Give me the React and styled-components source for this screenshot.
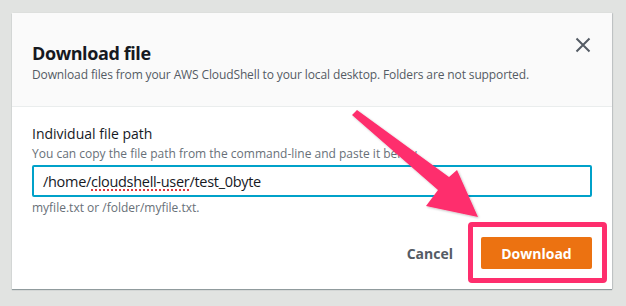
import React from "react";
import styled, { createGlobalStyle } from "styled-components";

const GlobalStyle = createGlobalStyle`
  html, body {
    margin: 0;
    padding: 0;
    background: #e1e3e1;
    font-family: "Open Sans", "Noto Sans", Arial, sans-serif;
  }
`;

const Page = styled.div`
  width: 626px;
  height: 306px;
  padding: 13px 0 0 12px;
  box-sizing: border-box;
  overflow: hidden;
`;

const Modal = styled.div`
  position: relative;
  width: 600px;
  height: 276px;
  background: #fff;
  display: flex;
  flex-direction: column;
  box-shadow: 0 1px 1px rgba(0, 28, 36, 0.35), 1px 0 1px rgba(0, 28, 36, 0.1);
`;

const Header = styled.div`
  background: #fafafa;
  border-bottom: 1px solid #eaeded;
  height: 94px;
  box-sizing: border-box;
  padding: 28px 20px 0 20px;
  position: relative;
`;

const Title = styled.h2`
  margin: 0;
  font-size: 18px;
  line-height: 24px;
  font-weight: 700;
  letter-spacing: -0.4px;
  color: #16191f;
`;

const Subtitle = styled.p`
  margin: 2px 0 0;
  font-size: 12px;
  line-height: 16px;
  letter-spacing: -0.12px;
  color: #545b64;
`;

const CloseButton = styled.button`
  position: absolute;
  top: 20px;
  right: 17px;
  width: 24px;
  height: 24px;
  border: 0;
  background: none;
  padding: 0;
  display: flex;
  align-items: center;
  justify-content: center;
  cursor: pointer;
`;

const Body = styled.div`
  padding: 17px 20px 0 20px;
  flex: 1;
`;

const Label = styled.div`
  font-size: 14px;
  line-height: 20px;
  color: #16191f;
`;

const Description = styled.div`
  font-size: 12px;
  line-height: 16px;
  color: #687078;
  margin-top: 2px;
`;

const InputBox = styled.div`
  margin-top: 3px;
  height: 32px;
  box-sizing: border-box;
  border: 2px solid #00a1c9;
  border-radius: 2px;
  padding: 0 9px;
  display: flex;
  align-items: center;
  font-size: 14.5px;
  letter-spacing: -0.3px;
  color: #16191f;
  white-space: nowrap;
`;

const Misspelled = styled.span`
  text-decoration: underline dotted #e0383e;
  text-decoration-thickness: 2px;
  text-underline-offset: 3px;
`;

const Hint = styled.div`
  font-size: 12px;
  line-height: 16px;
  color: #687078;
  margin-top: 3px;
`;

const Footer = styled.div`
  display: flex;
  justify-content: flex-end;
  align-items: center;
  gap: 28px;
  padding: 0 20px 20px 20px;
`;

const TextButton = styled.button`
  border: 0;
  background: none;
  font-family: inherit;
  font-size: 14px;
  font-weight: 700;
  color: #545b64;
  padding: 0;
`;

const PrimaryButton = styled.button`
  width: 111px;
  height: 32px;
  border: 0;
  border-radius: 2px;
  background: #ec7211;
  color: #fff;
  font-family: inherit;
  font-size: 14px;
  font-weight: 700;
`;

const Highlight = styled.div`
  position: absolute;
  left: 456px;
  top: 209px;
  width: 139px;
  height: 61px;
  box-sizing: border-box;
  border: 5px solid #fe2e6d;
  border-radius: 4px;
  pointer-events: none;
`;

const Arrow = styled.svg`
  position: absolute;
  left: 0;
  top: 0;
  pointer-events: none;
  overflow: visible;
`;

export default function App() {
  return (
    <>
      <GlobalStyle />
      <Page>
        <Modal>
          <Header>
            <Title>Download file</Title>
            <Subtitle>
              Download files from your AWS CloudShell to your local desktop. Folders are not supported.
            </Subtitle>
            <CloseButton aria-label="Close">
              <svg width="16" height="16" viewBox="0 0 16 16">
                <path d="M1.5 1.5 L14.5 14.5 M14.5 1.5 L1.5 14.5" stroke="#545b64" strokeWidth="2" fill="none" />
              </svg>
            </CloseButton>
          </Header>
          <Body>
            <Label>Individual file path</Label>
            <Description>You can copy the file path from the command-line and paste it below.</Description>
            <InputBox>
              /home/<Misspelled>cloudshell-user</Misspelled>/test_0byte
            </InputBox>
            <Hint>myfile.txt or /folder/myfile.txt.</Hint>
          </Body>
          <Footer>
            <TextButton>Cancel</TextButton>
            <PrimaryButton>Download</PrimaryButton>
          </Footer>
          <Highlight />
          <Arrow width="600" height="276">
            <defs>
              <filter id="sh" x="-20%" y="-20%" width="140%" height="140%">
                <feDropShadow dx="1" dy="1" stdDeviation="1" floodColor="#000" floodOpacity="0.25" />
              </filter>
            </defs>
            <polygon
              points="340,102 345,97 437,164 445,157 466,204 414,193 426,177"
              fill="#fe2e6d"
              filter="url(#sh)"
            />
          </Arrow>
        </Modal>
      </Page>
    </>
  );
}
